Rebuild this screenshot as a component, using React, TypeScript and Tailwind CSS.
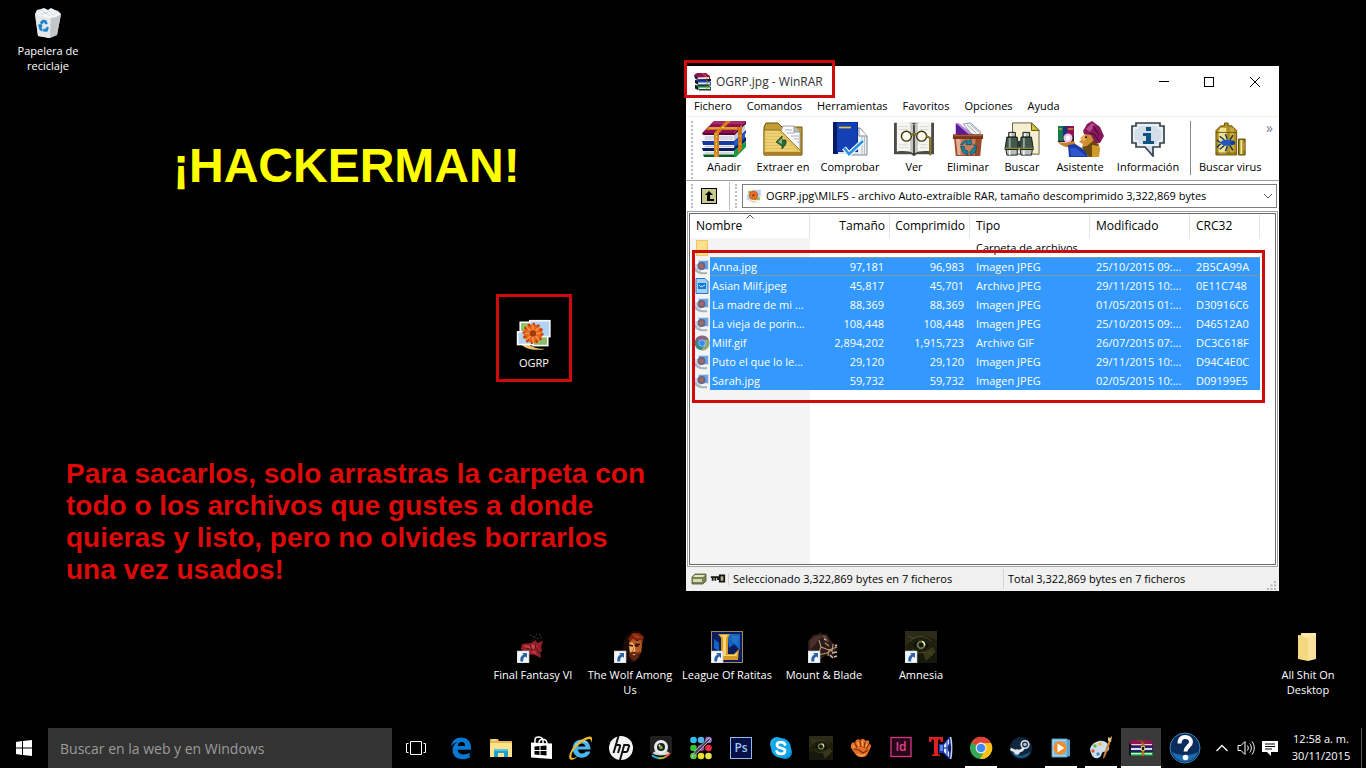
import type { ReactNode } from "react";

type IconProps = { className?: string };

/* ---------- Desktop icons ---------- */

function ShortcutArrow() {
  return (
    <g>
      <rect x="0" y="20" width="12" height="12" fill="#f4f6f8" stroke="#b9bec4" strokeWidth="0.6" />
      <path d="M5 22h5v5L8.4 25.4C6.600 26.400 6 28 6.200 30.500H3.400C2.800 27 4 24.800 6.600 23.600z" fill="#2c62a6" />
    </g>
  );
}

function RecycleBinIcon() {
  return (
    <svg viewBox="0 0 28 32" className="h-8 w-7" aria-hidden="true">
      <path d="M1 7l16 3 10-3-4 21-8 3-11-2z" fill="#d9dbdd" />
      <path d="M1 7l16 3-1 21-12-2z" fill="#e6e8e9" />
      <path d="M17 10l10-3-4 21-7 3z" fill="#c2c6c9" />
      <path d="M1 7l2-4 4-1 3-1 4 2 3-2 4 2 3 1 3 3-5 3-6 1-6-1z" fill="#f5f6f7" />
      <path d="M4 5l4-2 3 4 4-3 4 4 4-3M7 8l4-3 5 4" fill="none" stroke="#c9cdd0" strokeWidth="0.8" />
      <path d="M5.500 15.500l3.500-3 3.500 1 1.200 3.500-2.600.3-1-2-2.300 2.200z" fill="#1b84d0" />
      <path d="M4 17.500l3.500-.5 1 2-1 2 1.200 1.500-.4 2-2.800-1.500z" fill="#1b84d0" />
      <path d="M9 24.500l.6-3 1.500.6 2-2.600 1.800 1.200-1.600 4z" fill="#1b84d0" />
    </svg>
  );
}

function PhotoIcon({ className = "h-4 w-4" }: IconProps) {
  return (
    <svg viewBox="0 0 34 30" className={className} aria-hidden="true">
      <path d="M1 14c0 10 8 15 20 15 3 0 5 0 6-1-12 0-19-5-21-15z" fill="#ecc268" />
      <rect x="4" y="3" width="13" height="11" fill="#92c46a" stroke="#fff" strokeWidth="1.500" />
      <rect x="1.500" y="12" width="16" height="12" fill="#b4d3ec" stroke="#fff" strokeWidth="1.500" />
      <rect x="16" y="14" width="14" height="11" fill="#8dbd6a" stroke="#fff" strokeWidth="1.500" />
      <rect x="13" y="1.500" width="19" height="15" fill="#b2d2f4" stroke="#f5f5f5" strokeWidth="1.500" />
      <circle cx="16" cy="13.500" r="9" fill="#e8661e" />
      <circle cx="16" cy="13.500" r="8.500" fill="none" stroke="#c23f0c" strokeWidth="3" strokeDasharray="2 2.400" />
      <path d="M16 5v17M8 13.500h16M10 7.500l12 12M22 7.500l-12 12" stroke="#f79a48" strokeWidth="1.300" />
      <circle cx="16" cy="13.500" r="3" fill="#a33a0c" />
    </svg>
  );
}

function FinalFantasyIcon() {
  return (
    <svg viewBox="0 0 32 32" className="h-8 w-8" aria-hidden="true">
      <path d="M15 10l3-4 3 2 5-2M13 4l3 2 4-3M22 3l2 2" stroke="#39403f" strokeWidth="1" fill="none" strokeDasharray="2 1.500" />
      <path d="M5 13l9-1 5-3 1 3 6-2-2 6 1 4-2 1 1 6-6-3-9-1-5-5z" fill="#97202b" />
      <path d="M8 14l5 1 4-2 3 2-3 3-6-1-4-1zM14 21l4-1 2 3" fill="#c8424a" />
      <path d="M9 17l3 1M13 14l2 5M18 13l1 5M20 18l2 5" stroke="#481016" strokeWidth="1" />
      <ShortcutArrow />
    </svg>
  );
}

function WolfIcon() {
  return (
    <svg viewBox="0 0 32 32" className="h-8 w-8" aria-hidden="true">
      <path d="M8 20l3-14 7-6h6l6 5-2 9 1 5-4 8-6 5-6-2-4-5z" fill="#1c0a06" />
      <path d="M14 8l5-6 6 0 5 4-2 7-4-4-8 1z" fill="#7c2410" />
      <path d="M18 3l5 1 5 3-6 0z" fill="#a83c18" />
      <path d="M15 11l4-3 4 2 4-1 1 5-1 7-4 6-4 1-3-5z" fill="#b55a26" />
      <path d="M15 13l3-2 2 3-1 5-3 3z" fill="#f0ae60" />
      <path d="M21 12l4 1-1 3-2 0z" fill="#5a200e" />
      <path d="M15 14l4 1M21 15l5-2" stroke="#2c0c04" strokeWidth="1.400" />
      <path d="M15 22l5-1 4 1 2-2-1 6-4 4-3-1-3-4z" fill="#5e2412" />
      <path d="M18 23h4l-2 1.500z" fill="#e8a06a" />
      <path d="M20 15l1 5-2 0" stroke="#ffd08a" fill="none" />
      <ShortcutArrow />
    </svg>
  );
}

function LeagueIcon() {
  return (
    <svg viewBox="0 0 32 32" className="h-8 w-8" aria-hidden="true">
      <rect x="0.500" y="0.500" width="31" height="31" fill="#0a1c5c" stroke="#9b8b58" />
      <path d="M16 3h13v16l-6-6-5 4zM3 8l5 4v8l-5-3z" fill="#1463c0" />
      <path d="M20 4l8 1-2 9-5-4z" fill="#2472c8" />
      <path d="M7 3h12l-2 4v16h6l5-5-1 11H6l4-4V7z" fill="#d99a24" />
      <path d="M9 4h8l-2 3v17h8l3-3-.5 4H11l1-2V7z" fill="#f7d675" />
      <ShortcutArrow />
    </svg>
  );
}

function MountBladeIcon() {
  return (
    <svg viewBox="0 0 32 32" className="h-8 w-8" aria-hidden="true">
      <path d="M0 21V10l5-6 5-1 3-2 1 2 5 0 2 4 4 5 4 1 1 4-2 2 1 3-4 1 2 3-4 1-5-3-6 5z" fill="#2b1c1a" />
      <path d="M2 10l4-4 6-2 3 2-5 3-3 5-5 4z" fill="#4a302c" />
      <path d="M14 4l4 1 3 6-4-1z" fill="#6a4a44" />
      <path d="M11 9l2 7 8 3 8-3M13 16l-3 8 9-2 6-4M21 18l-1 7M25 13l-1 8M17 12l4 3" stroke="#b89474" strokeWidth="1.100" fill="none" />
      <path d="M24 22l5-1M26 26l3-1M22 24l3 3M27 15l2-1" stroke="#c9b8a8" strokeWidth="1.400" />
      <path d="M16 8l2 1" stroke="#d8b0a0" strokeWidth="1.300" />
      <ShortcutArrow />
    </svg>
  );
}

function AmnesiaArt() {
  return (
    <g>
      <rect width="32" height="32" fill="#1e1f0f" />
      <path d="M0 0h32v9L20 5 8 8 0 16z" fill="#2b2c17" />
      <path d="M0 24l10-5 12 4 10-6v15H0z" fill="#16180c" />
      <path d="M18 22l10-6 3 5-10 9z" fill="#363819" />
      <path d="M8 14c4-6 12-6 16 1-4 5-12 5-16-1z" fill="#0e1008" />
      <circle cx="16" cy="14" r="4.400" fill="#6d7240" />
      <circle cx="16" cy="14" r="2.400" fill="#121507" />
      <path d="M17 10.500c2 .5 3 2 2.500 4" stroke="#e6ecc4" strokeWidth="1.500" fill="none" />
      <path d="M5 10c6-6 15-6 21 0M7 18l5 4 10-1M24 20l3 5M3 5l5 2" stroke="#484a28" fill="none" />
    </g>
  );
}

function AmnesiaIcon() {
  return (
    <svg viewBox="0 0 32 32" className="h-8 w-8" aria-hidden="true">
      <AmnesiaArt />
      <ShortcutArrow />
    </svg>
  );
}

function DesktopFolderIcon() {
  return (
    <svg viewBox="0 0 32 32" className="h-8 w-8" aria-hidden="true">
      <path d="M6 4h11l3 3v21H6z" fill="#e5bf58" />
      <path d="M9 2h15v26H9z" fill="#fbe9a8" />
      <path d="M6 4l10 3v23L6 28z" fill="#f5d77f" />
      <path d="M16 7l8-3v24l-8 2z" fill="#f9e19a" />
    </svg>
  );
}

/* ---------- WinRAR icons ---------- */

function WinRarLogo({ className = "h-4 w-4" }: IconProps) {
  return (
    <svg viewBox="0 0 18 18" className={className} aria-hidden="true">
      <path d="M0 2l3-2h9l4 3v3H4z" fill="#8c1450" />
      <path d="M3 4.500l12-.5v2H4z" fill="#f0e4ea" />
      <path d="M1 7l3 1.500L17 8V6l-4 0z" fill="#1c1030" />
      <path d="M1 7l3-.5h9L17 9v2.500H4L1 9z" fill="#1f48b8" />
      <path d="M4 9.500h12v1.800H4z" fill="#dfe8f8" />
      <path d="M1 12l3 0h10l3 2v3H5l-4-2z" fill="#127a34" />
      <path d="M4 14.500h12v1.600H5z" fill="#dcf2e0" />
      <path d="M0 2l3.500 2.500v2L1 5.500zM1 7l3 2v2.500L1 10zM1 12l3 2.200V17l-3-1.500z" fill="#14101c" />
      <path d="M8 0l5 4v13" fill="none" stroke="#b58a28" strokeWidth="0.900" />
      <path d="M3 7h13M4 12h13M5 17h12" stroke="#14101c" strokeWidth="0.900" />
    </svg>
  );
}

function AddIcon() {
  return (
    <svg viewBox="0 0 44 36" className="h-9 w-11" aria-hidden="true">
      <path d="M0 12L12 0h32L32 12z" fill="#8d1150" />
      <path d="M12 0h32l-3 3H9z" fill="#a92a6c" />
      <path d="M0 12h32v2H1z" fill="#5c0832" />
      <path d="M32 12L44 0v3L32 15z" fill="#6a0c40" />
      <path d="M2 14h30v6H1z" fill="#f1f2f7" />
      <path d="M32 15L43 4v5L32 20z" fill="#c9cad8" />
      <path d="M0 20h32l12-11v3L32 24H1z" fill="#173a9c" />
      <path d="M2 24h30v4H1z" fill="#eef1f8" />
      <path d="M32 21l11-10v7L32 28z" fill="#2258c8" />
      <path d="M0 27h32l12-11v4L32 30H1z" fill="#0d1d60" />
      <path d="M2 30h30v4H1z" fill="#e8f4ec" />
      <path d="M32 30l12-10v6L34 36h-2z" fill="#169a40" />
      <path d="M1 33.500h31V36H2z" fill="#0b5a24" />
      <path d="M3 16h28M3 18h28M3 25.500h28M3 32h28" stroke="#a8adbe" strokeWidth="0.700" />
      <path d="M12 12L24 0h5L17 12v24h-5z" fill="#db7c1c" />
      <path d="M6 6h32l-3 3H4zM36 8l4-4v24l-4 4z" fill="#cf7318" />
      <path d="M14 12v24M7 7h28" stroke="#f9bd5b" strokeWidth="1" />
      <g fill="#ffe14d" stroke="#7e4108" strokeWidth="0.500">
        <circle cx="14.500" cy="16" r="1.400" />
        <circle cx="14.500" cy="23" r="1.400" />
        <circle cx="14.500" cy="30" r="1.400" />
        <circle cx="21" cy="6.500" r="1.600" />
        <circle cx="38" cy="15" r="1.200" />
        <circle cx="38" cy="23" r="1.200" />
      </g>
    </svg>
  );
}

function ExtractIcon() {
  return (
    <svg viewBox="0 0 40 34" className="h-9 w-10" aria-hidden="true">
      <path d="M1 5l2-4h12l4 4h20v28H1z" fill="#c39c38" stroke="#6d5108" />
      <path d="M20 4h11l6 6v20L18 9z" fill="#f8f8fa" stroke="#838383" strokeWidth="0.700" />
      <path d="M31 4v6h6" fill="#bac3cc" stroke="#777" strokeWidth="0.700" />
      <path d="M22 8h7M24 11h8M28 14h8M31 17h5M34 20h3" stroke="#a9b4c0" />
      <path d="M1 8h16l21 21v4H1z" fill="#e2c05c" stroke="#8a6912" strokeWidth="0.800" />
      <path d="M3 10h13M3 13h15M3 16h18M3 19h21M3 22h24M3 25h27M3 28h30" stroke="#f6e296" />
      <path d="M1 30h37v3H1z" fill="#a98024" />
      <path d="M13 20l6-6v4h4v4l-4 5v-3z" fill="#2e6838" stroke="#153d1c" strokeWidth="0.700" />
      <path d="M15 20l4-4v6z" fill="#8fb878" />
    </svg>
  );
}

function TestIcon() {
  return (
    <svg viewBox="0 0 36 36" className="h-9 w-9" aria-hidden="true">
      <path d="M16 7h12l7 8v19H16z" fill="#edf0f4" stroke="#7d858f" />
      <path d="M27 7v8h8" fill="#fff" stroke="#7d858f" />
      <path d="M30 15v18M32.500 15v18" stroke="#b5bbc3" />
      <path d="M1 1h25v32H1z" fill="#0c2c98" />
      <path d="M4 2h21v28H4z" fill="#1440b4" />
      <path d="M1 1h4v32H1z" fill="#061a68" />
      <path d="M6 32h20" stroke="#d8e0f2" strokeWidth="2" />
      <path d="M7 6.500h12" stroke="#dfc34c" strokeWidth="1.700" />
      <path d="M12 27l5 6L31 20" fill="none" stroke="#fff" strokeWidth="5" />
      <path d="M12 27l5 6L31 20" fill="none" stroke="#2796e2" strokeWidth="2.600" />
    </svg>
  );
}

function ViewIcon() {
  return (
    <svg viewBox="0 0 42 36" className="h-9 w-10" aria-hidden="true">
      <path d="M0 1h42v33H24l-3 2-3-2H0z" fill="#4e4a46" />
      <path d="M3 0c8 0 14 0 18 3 4-3 10-3 18-3v31c-9-1-14 0-18 2-4-2-9-3-18-2z" fill="#f5f5f2" />
      <path d="M17 1l4 2 4-2v30l-4 2-4-2z" fill="#c4c4c0" />
      <path d="M21 3v31" stroke="#252525" strokeWidth="1.600" />
      <path d="M5 5h10M27 5h10M5 8h10M27 8h10M5 24h10M27 24h8M5 27h10M27 27h8" stroke="#d8d8d4" />
      <circle cx="13" cy="15" r="5.200" fill="#fbfbee" stroke="#3c340c" strokeWidth="1.500" />
      <circle cx="29" cy="15" r="5.200" fill="#fbfbee" stroke="#3c340c" strokeWidth="1.500" />
      <path d="M18 14c2-2 4-2 6 0M34 15l4 2v18" fill="none" stroke="#4a400c" strokeWidth="2.200" />
      <path d="M18 14c2-2 4-2 6 0M34 15l4 2v18" fill="none" stroke="#c2a630" strokeWidth="1" />
    </svg>
  );
}

function DeleteIcon() {
  return (
    <svg viewBox="0 0 34 36" className="h-9 w-8" aria-hidden="true">
      <path d="M4 1l19 14H4z" fill="#5c1c98" />
      <path d="M4 1h3l17 13-3 2z" fill="#b98ad8" />
      <path d="M12 2l8-1 11 10-5 4-6-3z" fill="#f3f4f5" stroke="#777c81" strokeWidth="0.800" />
      <path d="M16 3l10 9M20 3l9 8" stroke="#9ea6ac" />
      <path d="M2 15h30l-2 21H4z" fill="#9a4b2d" />
      <path d="M5 18h20l-1 17H6z" fill="#c4805e" />
      <path d="M4 18h5v17H6z" fill="#e0b090" />
      <path d="M1 13h32v5H1z" fill="#7c3216" />
      <path d="M2 14.500h30" stroke="#bc6c48" />
      <path d="M9 24l5-5 4 1 2-2 1 6h-6l1-2-2-.5-3 3zM9 26h4v3l4 2v4l-5-2zM19 32l5-6-1-2 3 1-1 7-5 3z" fill="#1a86a0" stroke="#0b3f54" strokeWidth="0.700" />
    </svg>
  );
}

function FindIcon() {
  return (
    <svg viewBox="0 0 38 36" className="h-9 w-9" aria-hidden="true">
      <path d="M9 1h20l8 8v25H9z" fill="#f6efcf" stroke="#64593a" />
      <path d="M29 1v8h8z" fill="#d8c332" stroke="#5b5018" />
      <path d="M5 11h7v5H5zM20 11h7v5h-7z" fill="#b5bab5" stroke="#111" />
      <path d="M3 16h11l1 13H1zM18 16h11l2 13H17z" fill="#42584e" stroke="#0e1712" />
      <path d="M2 29h12v6H3zM17 29h13l-1 6H18z" fill="#b7bcbc" stroke="#161a19" />
      <path d="M14 20h4v7h-4z" fill="#2d3b34" />
      <path d="M6 17v11M21 17v11" stroke="#94aa9c" strokeWidth="2" />
      <path d="M6 30v5M21 30v5M7 12v3M22 12v3" stroke="#fff" strokeWidth="1.500" />
      <path d="M1 28h14M17 28h14" stroke="#8c862c" strokeWidth="1.300" />
    </svg>
  );
}

function WizardIcon() {
  return (
    <svg viewBox="0 0 48 36" className="h-9 w-12" aria-hidden="true">
      <path d="M2 5h16v16H2z" fill="#2a1426" />
      <path d="M2 5h5v15H2z" fill="#15794a" />
      <path d="M7 5h4v15H7z" fill="#1b2f86" />
      <path d="M11 5h7v10h-7z" fill="#86144e" />
      <path d="M12 8h5M3 8h3" stroke="#e9c34a" />
      <circle cx="12" cy="17" r="4.500" fill="#f3c8ec" />
      <circle cx="12" cy="17" r="2.200" fill="#fff" />
      <path d="M1 20c4 3 12 1 17 0l2 4c-4 4-14 3-19-4z" fill="#c58038" />
      <path d="M12 24l7-1 15 9 3 4H13z" fill="#1b3aa4" />
      <path d="M14 27l6 0 10 8H15z" fill="#2e58cc" />
      <path d="M29 10l12 6 3 12-1 8H32l-3-8-3-2 1-3-4-2 5-5z" fill="#cf8e34" />
      <path d="M24 17l5-4 1 5-2 3z" fill="#e8ae54" />
      <path d="M26 26l5-1 7-6 5 6v11H33z" fill="#6b4a10" />
      <path d="M36 24l7 1v11h-7z" fill="#d0992a" />
      <path d="M27 10l4-7 5-3 8 6 4 9-4 7-5 0-4-8-7-1z" fill="#86185c" />
      <path d="M30 8l6-6 3 2-5 7z" fill="#b64c8c" />
      <path d="M34 12l5 2 4 6M37 5l6 9" fill="none" stroke="#520c38" strokeWidth="1.300" />
      <path d="M29 16l2 .5" stroke="#1c0f04" strokeWidth="1.500" />
    </svg>
  );
}

function InfoIcon() {
  return (
    <svg viewBox="0 0 36 36" className="h-9 w-9" aria-hidden="true">
      <path d="M6 2h24v3h4v17h-4v4h-7v9l-8-9H6v-4H2V5h4z" fill="#d4dee8" stroke="#38424c" strokeWidth="1.700" />
      <path d="M8 4h20v3h4v13h-4v4H8v-4H4V7h4z" fill="none" stroke="#fff" />
      <path d="M16 6h5v4h-5zM13 12h8v8h3v3H13v-3h3v-5h-3z" fill="#0d537f" />
    </svg>
  );
}

function VirusIcon() {
  return (
    <svg viewBox="0 0 34 36" className="h-9 w-8" aria-hidden="true">
      <path d="M10 1h4v3h4l5 5v26H1V9l5-5h4z" fill="#b09224" stroke="#67500b" />
      <path d="M6 6h6v28H4V9z" fill="#f0e394" />
      <path d="M16 6h4v28h-4z" fill="#caaa37" />
      <path d="M1 11h22M1 33h22" stroke="#725809" />
      <ellipse cx="13" cy="22" rx="7" ry="3.300" fill="#1f58c0" />
      <circle cx="19" cy="22" r="2.500" fill="#123e90" />
      <path d="M10 19L5 15M13 18l-2-5M16 19l3-5M10 25l-5 4M13 26l-2 5M16 25l3 5M6 22l-4-3M6 23l-4 4" stroke="#0b2962" strokeWidth="1.400" />
      <path d="M25 18h7v17h-7z" fill="#9c851d" stroke="#564708" />
      <path d="M28 19v15" stroke="#f2ec9a" strokeWidth="2" />
      <path d="M30 22h2v8h-2z" fill="#c08a31" />
    </svg>
  );
}

function DriveIcon() {
  return (
    <svg viewBox="0 0 16 12" className="h-3 w-4" aria-hidden="true">
      <path d="M1 4l3-3h11v7l-3 3H1z" fill="#798452" stroke="#4e5b36" strokeWidth="0.800" />
      <path d="M2 4l2-2h10l-2 2z" fill="#dfe5bc" />
      <path d="M2 6h9v3H2z" fill="#d5dcae" />
    </svg>
  );
}

function KeyIcon() {
  return (
    <svg viewBox="0 0 18 12" className="h-3 w-4" aria-hidden="true">
      <path d="M1 3h9V1h7v9h-7V7H8V5H7v3H5V5H4v3H2V5H1z" fill="#16160f" />
      <path d="M12 3h3v5h-3z" fill="#b8b494" />
    </svg>
  );
}

function ImageFileIcon() {
  return (
    <svg viewBox="0 0 16 16" className="h-4 w-4 shrink-0" aria-hidden="true">
      <path d="M1 5h6v8H1z" fill="#c3d5e8" />
      <path d="M1 9c1 4 5 6 12 5" fill="none" stroke="#a9b4b4" strokeWidth="2" />
      <path d="M4.500 1.500h10v9h-10z" fill="#6ea2dc" stroke="#cfe0f1" />
      <circle cx="7.500" cy="7" r="4" fill="#6a6488" />
      <circle cx="7.500" cy="7" r="2.300" fill="#a8685c" />
    </svg>
  );
}

function JpegFileIcon() {
  return (
    <svg viewBox="0 0 16 16" className="h-4 w-4 shrink-0" aria-hidden="true">
      <path d="M2 .5h9l3 3v12H2z" fill="#a4cff6" stroke="#287ac8" />
      <path d="M4 5h8v6H4z" fill="#1478d6" />
      <path d="M5 7l2 2 2-1 2-1" fill="none" stroke="#d2ebff" />
    </svg>
  );
}

function ChromeIcon({ className = "h-6 w-6" }: IconProps) {
  return (
    <svg viewBox="0 0 24 24" className={className} aria-hidden="true">
      <circle cx="12" cy="12" r="11" fill="#35a852" />
      <path d="M12 12L2.500 6.500A11 11 0 0 1 22 7H12z" fill="#e44134" />
      <path d="M22 7a11 11 0 0 1-11 16l5-9-1-7z" fill="#fbc116" />
      <circle cx="12" cy="12" r="5.400" fill="#f4f4f4" />
      <circle cx="12" cy="12" r="4.300" fill="#4285f4" />
    </svg>
  );
}

function ChromeFileIcon() {
  return (
    <svg viewBox="0 0 24 24" className="h-4 w-4 shrink-0" aria-hidden="true">
      <circle cx="12" cy="12" r="11" fill="#358a88" />
      <path d="M12 12L2.500 6.500A11 11 0 0 1 22 7H12z" fill="#8c6480" />
      <path d="M22 7a11 11 0 0 1-11 16l5-9-1-7z" fill="#96a878" />
      <circle cx="12" cy="12" r="5.400" fill="#a4ccf8" />
      <circle cx="12" cy="12" r="4.300" fill="#3a8cf4" />
    </svg>
  );
}

/* ---------- Taskbar icons ---------- */

const svg24 = "h-6 w-6";

function WindowsLogo() {
  return (
    <svg viewBox="0 0 16 16" className="h-4 w-4" aria-hidden="true">
      <path d="M0 2l6-1v6.500H0zM7 1l9-1v7.500H7zM0 8.500h6V15l-6-1zM7 8.500h9V16l-9-1z" fill="#fff" />
    </svg>
  );
}

function TaskViewIcon() {
  return (
    <svg viewBox="0 0 20 14" className="h-[14px] w-5" fill="none" stroke="#fff" aria-hidden="true">
      <path d="M4.500.5h11v13h-11zM2.500 2.500h-2v9h2M17.500 2.500h2v9h-2" />
    </svg>
  );
}

function EdgeIcon() {
  return (
    <svg viewBox="0 0 24 24" className={svg24} aria-hidden="true">
      <path d="M2 10.500C3.200 4.500 7 1.500 12.200 1.500c6.300 0 9.800 4.600 9.800 10v2.300H8.700c.3 3.400 3 4.700 6 4.700 2.300 0 4.200-.6 6-1.700v4.600c-2 1.100-4.500 1.800-7.200 1.800-6 0-10-3.600-10-9.200 0-3.500 1.900-6.500 5.200-8-3.300.8-5.300 2.500-6.700 4.500zM8.800 10h7.300c0-2.500-1.100-4-3.300-4-2.300 0-3.700 1.500-4 4z" fill="#0879d2" />
    </svg>
  );
}

function ExplorerIcon() {
  return (
    <svg viewBox="0 0 24 24" className={svg24} aria-hidden="true">
      <path d="M1 3h8l1 2h13v16H1z" fill="#e5b957" />
      <path d="M1 7h22v14H1z" fill="#ffe28c" />
      <path d="M3 4h4" stroke="#fff3c5" />
      <path d="M5 13h14v8h-4v-4H9v4H5z" fill="#1e9fcc" />
      <path d="M5 13h14v2H5z" fill="#52c5e5" />
    </svg>
  );
}

function StoreIcon() {
  return (
    <svg viewBox="0 0 24 24" className={svg24} aria-hidden="true">
      <path d="M2 6.500l21 1V23L2 21.500z" fill="#fff" />
      <path d="M6 8V4c0-4 7-4 8 0v4M10 7c0-5 7-5 8 0v2" fill="none" stroke="#fff" strokeWidth="1.500" />
      <path d="M5.500 10.500l5-.5v4h-5zM11.500 10l6-.5V14h-6zM5.500 15h5v4l-5-.5zM11.500 15h6v4.500l-6-.5z" fill="#000" />
    </svg>
  );
}

function InternetExplorerIcon() {
  return (
    <svg viewBox="0 0 24 24" className={svg24} aria-hidden="true">
      <path d="M12.500 3.500C18 3.500 21.500 7.500 21.500 13.500H9c.3 2.700 1.800 4 4 4 1.800 0 3-.7 3.800-2h4.500c-1.200 4-4.400 6.200-8.300 6.200-5.700 0-9.300-4-9.300-9.200S7.200 3.500 12.500 3.500zM9.100 10.500h7.300c-.3-2-1.600-3-3.600-3-1.900 0-3.300 1.100-3.700 3z" fill="#4cb4ec" />
      <path d="M5 12c1-4 4-7 8-7.500 3 0 5 1 6 3-3-2-9-2-11 1z" fill="#a4defb" />
      <path d="M4 15C2 19 1.500 22 4 22c1.500 0 3-.7 5-2-2.500 3-5.500 4.500-7.500 3.500-3-1.700-.5-9 5-14.500C13 2.500 20-.5 22.300 1c1.400 1 .9 3.500-.3 6 .3-2.500 0-4-1.600-4-3.400 0-12.400 6-16.400 12z" fill="#f1b829" />
    </svg>
  );
}

function HpIcon() {
  return (
    <svg viewBox="0 0 24 24" className={svg24} aria-hidden="true">
      <circle cx="12" cy="12" r="12" fill="#f5f5f5" />
      <g fill="none" stroke="#111" strokeWidth="2">
        <path d="M9.500 0L4.500 17M6.800 9h3.500c.8 0 1 .6.800 1.200L9 17M15.500 8L11 24M15 9h4c1 0 1.300.6 1 1.500L18.500 15c-.2.700-.7 1-1.500 1h-4" />
      </g>
    </svg>
  );
}

function WebcamIcon() {
  return (
    <svg viewBox="0 0 24 24" className={svg24} aria-hidden="true">
      <rect x="1" y="0" width="22" height="18" rx="2" fill="#202020" />
      <path d="M3 19c2 2 4 3 7 3" fill="none" stroke="#1fa6d1" strokeWidth="2" />
      <path d="M9 22c3 .5 6 0 8-1.500" fill="none" stroke="#9bc935" strokeWidth="2" />
      <path d="M16 21c2-1 4-2 5-4" fill="none" stroke="#ef563d" strokeWidth="2" />
      <ellipse cx="12" cy="17" rx="8" ry="2.500" fill="#cfd3d1" />
      <circle cx="12" cy="11" r="7" fill="#e8ebea" />
      <circle cx="12" cy="11" r="4" fill="#172023" />
      <circle cx="12" cy="11.500" r="1.800" fill="#7fa72d" />
      <circle cx="10.500" cy="9.500" r="1" fill="#fff" />
    </svg>
  );
}

function PaletteDotsIcon() {
  return (
    <svg viewBox="0 0 24 24" className={svg24} aria-hidden="true">
      <circle cx="4.500" cy="4" r="3.300" fill="#2dbff0" />
      <circle cx="12" cy="4" r="3.300" fill="#54b5ed" />
      <circle cx="19.500" cy="4" r="3.300" fill="#a869dd" />
      <circle cx="4.500" cy="12" r="3.300" fill="#31c631" />
      <circle cx="12" cy="12" r="3.300" fill="#a33ba7" />
      <circle cx="19.500" cy="12" r="3.300" fill="#f12942" />
      <circle cx="4.500" cy="20" r="3.300" fill="#4fd034" />
      <circle cx="12" cy="20" r="3.300" fill="#e7df20" />
      <circle cx="19.500" cy="20" r="3.300" fill="#e8e04a" />
      <path d="M3 21l3-6L20 2l2 1-14 14z" fill="#41464f" stroke="#c7d0d6" strokeWidth="0.800" />
    </svg>
  );
}

function PhotoshopIcon() {
  return (
    <svg viewBox="0 0 24 24" className={svg24} aria-hidden="true">
      <rect x="1.500" y="1.500" width="21" height="21" fill="#071044" stroke="#8cb9f4" />
      <text x="12" y="16" textAnchor="middle" fontSize="12" fontWeight="600" fontFamily="Open Sans, sans-serif" fill="#9bc6fa">
        Ps
      </text>
    </svg>
  );
}

function SkypeIcon() {
  return (
    <svg viewBox="0 0 24 24" className={svg24} aria-hidden="true">
      <circle cx="8" cy="8" r="7" fill="#1eb2ec" />
      <circle cx="16" cy="16" r="7" fill="#0798df" />
      <circle cx="12" cy="12" r="10" fill="#14a7e8" />
      <path d="M16 8.500c-.7-1.600-2-2.400-4-2.400-2.200 0-4 1-4 2.800 0 4 8 2.200 8 5.800 0 2-1.700 3.200-4.100 3.200-2.200 0-3.700-.9-4.300-2.600" fill="none" stroke="#fff" strokeWidth="2.700" strokeLinecap="round" />
    </svg>
  );
}

function EyeTaskIcon() {
  return (
    <svg viewBox="0 0 32 32" className={svg24} aria-hidden="true">
      <AmnesiaArt />
    </svg>
  );
}

function FistIcon() {
  return (
    <svg viewBox="0 0 24 24" className={svg24} aria-hidden="true">
      <path d="M2 12C1 8 4 5 6 7c0-4 5-5 5-2 1-3 5-3 5 0 3-2 5 0 4 3 3 0 2 3 1 5l-3 6c-2 3-8 3-11 0z" fill="#e36e27" />
      <path d="M6 7l2 5M11 5l1 6M16 6l-1 6M20 8l-3 5M5 13l5 1 4 3 5-3" fill="none" stroke="#7a2a0c" strokeWidth="1.100" />
      <path d="M4 9l1 3M8.500 6l1.500 4M13.500 5v5M18 8l-1 3M8 18c3 2 6 2 8 0" fill="none" stroke="#ffa550" strokeWidth="1.300" />
    </svg>
  );
}

function InDesignIcon() {
  return (
    <svg viewBox="0 0 24 24" className={svg24} aria-hidden="true">
      <rect x="2" y="1.500" width="20" height="19" fill="#250715" stroke="#da3887" strokeWidth="1.300" />
      <text x="12" y="15" textAnchor="middle" fontSize="12" fontWeight="600" fontFamily="Open Sans, sans-serif" fill="#e84291">
        Id
      </text>
    </svg>
  );
}

function SpeechIcon() {
  return (
    <svg viewBox="0 0 24 24" className={svg24} aria-hidden="true">
      <path d="M0 1h14v5h-2L11 3.500H9V18l2 1v1H3v-1l2-1V3.500H3L2 6H0z" fill="#e02020" />
      <path d="M10 8h4l6-7h2v22h-2l-6-6h-4z" fill="#1b36b4" />
      <path d="M11 9h3v6h-3z" fill="#5f86e8" />
      <path d="M15 9l5-6v18l-5-5z" fill="#e6ecf8" />
      <path d="M18 5v15M15 12h4" stroke="#3558c8" strokeWidth="1.400" />
      <path d="M21.500 1c1.500 4 1.500 18 0 22" fill="none" stroke="#cdd3de" strokeWidth="1.500" />
      <ellipse cx="20.500" cy="12" rx="1.700" ry="4" fill="#111d75" />
    </svg>
  );
}

function SteamIcon() {
  return (
    <svg viewBox="0 0 24 24" className={svg24} aria-hidden="true">
      <circle cx="12" cy="12" r="11" fill="#10263f" />
      <path d="M2 15a11 11 0 0 0 20 1L12 20z" fill="#1b587f" />
      <path d="M1.500 13l6.500 3 5-2 3-4" fill="none" stroke="#dfe5eb" strokeWidth="2.800" />
      <circle cx="16" cy="8.500" r="3.800" fill="#132b42" stroke="#dfe5eb" strokeWidth="1.600" />
      <circle cx="8" cy="16" r="2.800" fill="#dfe5eb" />
      <circle cx="16" cy="8.500" r="1.800" fill="#adc0cf" />
    </svg>
  );
}

function MediaIcon() {
  return (
    <svg viewBox="0 0 24 24" className={svg24} aria-hidden="true">
      <path d="M3 3h15v18H3z" fill="#a8d4ec" stroke="#4f9cc0" />
      <path d="M18 3l3 1v16l-3 1z" fill="#5aa2c8" />
      <path d="M5 5h12v14H5z" fill="#7cb8d8" />
      <circle cx="11" cy="12" r="6.500" fill="#f78a25" />
      <path d="M8.500 7.500l7 4.500-7 4.500z" fill="#fff" />
    </svg>
  );
}

function PaintIcon() {
  return (
    <svg viewBox="0 0 24 24" className={svg24} aria-hidden="true">
      <path d="M2 17C-1 12 4 6 10 5c6-1 11 3 10 8-1 4-4 2-6 3s-1 5-5 6c-3 1-6-1-7-5z" fill="#cfdde9" />
      <circle cx="4" cy="15" r="1.700" fill="#e45335" />
      <circle cx="6" cy="10" r="1.700" fill="#65b541" />
      <circle cx="11" cy="8" r="1.700" fill="#e9b728" />
      <circle cx="9" cy="18" r="1.700" fill="#388bd3" />
      <path d="M20 4l2 1-6 16-2 2 .5-4z" fill="#c8803a" />
      <path d="M19 1l2 1 2-2-1 6-3-1z" fill="#e8c17b" />
    </svg>
  );
}

function RarTaskIcon() {
  return (
    <svg viewBox="0 0 24 24" className={svg24} aria-hidden="true">
      <path d="M0 7l3-3h19l2 3v3H1z" fill="#8c1450" />
      <path d="M2 8h21v1.500H3z" fill="#ecc8da" />
      <path d="M0 10.500h24v4.500H1z" fill="#2a2590" />
      <path d="M2 12h21v2H2z" fill="#d8dcf4" />
      <path d="M0 15.500h24V20H1z" fill="#118a3a" />
      <path d="M2 17h21v1.500H2z" fill="#cdeed4" />
      <path d="M0 7l1.500 2v11L0 18zM0 10h24M0 15.300h24" fill="#140c20" stroke="#140c20" strokeWidth="0.800" />
      <path d="M7 4l10 3M12 4l3 4v12h-2V8z" fill="#c98a28" stroke="#7e5414" strokeWidth="0.700" />
      <rect x="12.500" y="10.500" width="3" height="4" fill="#1c1a14" stroke="#e4cb75" strokeWidth="0.800" />
    </svg>
  );
}

function HelpIcon() {
  return (
    <svg viewBox="0 0 32 32" className="h-8 w-8" aria-hidden="true">
      <circle cx="16" cy="16" r="15" fill="#0a2c5c" stroke="#3387b5" />
      <path d="M3 20a13.500 13.500 0 0 0 26 0c-6 4-20 4-26 0z" fill="#1a6cb0" />
      <path d="M10.500 11.500C10.500 7 13 5 16.200 5c3.300 0 5.800 1.900 5.800 5 0 4-5.500 4.800-5.500 9.500" fill="none" stroke="#fff" strokeWidth="4" />
      <circle cx="16.500" cy="25.500" r="2.800" fill="#fff" />
    </svg>
  );
}

/* ---------- Data ---------- */

const menus = ["Fichero", "Comandos", "Herramientas", "Favoritos", "Opciones", "Ayuda"];

const tools: { label: string; icon: ReactNode; width: string }[] = [
  { label: "Añadir", icon: <AddIcon />, width: "w-14" },
  { label: "Extraer en", icon: <ExtractIcon />, width: "w-[62px]" },
  { label: "Comprobar", icon: <TestIcon />, width: "w-18" },
  { label: "Ver", icon: <ViewIcon />, width: "w-14" },
  { label: "Eliminar", icon: <DeleteIcon />, width: "w-13" },
  { label: "Buscar", icon: <FindIcon />, width: "w-14" },
  { label: "Asistente", icon: <WizardIcon />, width: "w-15" },
  { label: "Información", icon: <InfoIcon />, width: "w-19" },
];

type FileRow = { name: string; size: string; packed: string; type: string; date: string; crc: string; icon: ReactNode };

const files: FileRow[] = [
  { name: "Anna.jpg", size: "97,181", packed: "96,983", type: "Imagen JPEG", date: "25/10/2015 09:...", crc: "2B5CA99A", icon: <ImageFileIcon /> },
  { name: "Asian Milf.jpeg", size: "45,817", packed: "45,701", type: "Archivo JPEG", date: "29/11/2015 10:...", crc: "0E11C748", icon: <JpegFileIcon /> },
  { name: "La madre de mi ...", size: "88,369", packed: "88,369", type: "Imagen JPEG", date: "01/05/2015 01:...", crc: "D30916C6", icon: <ImageFileIcon /> },
  { name: "La vieja de porin...", size: "108,448", packed: "108,448", type: "Imagen JPEG", date: "25/10/2015 09:...", crc: "D46512A0", icon: <ImageFileIcon /> },
  { name: "Milf.gif", size: "2,894,202", packed: "1,915,723", type: "Archivo GIF", date: "26/07/2015 07:...", crc: "DC3C618F", icon: <ChromeFileIcon /> },
  { name: "Puto el que lo le...", size: "29,120", packed: "29,120", type: "Imagen JPEG", date: "29/11/2015 10:...", crc: "D94C4E0C", icon: <ImageFileIcon /> },
  { name: "Sarah.jpg", size: "59,732", packed: "59,732", type: "Imagen JPEG", date: "02/05/2015 10:...", crc: "D09199E5", icon: <ImageFileIcon /> },
];

const pinned: { label: string; icon: ReactNode; running?: boolean; active?: boolean }[] = [
  { label: "Microsoft Edge", icon: <EdgeIcon /> },
  { label: "Explorador de archivos", icon: <ExplorerIcon /> },
  { label: "Tienda", icon: <StoreIcon /> },
  { label: "Internet Explorer", icon: <InternetExplorerIcon /> },
  { label: "HP", icon: <HpIcon /> },
  { label: "Cámara", icon: <WebcamIcon /> },
  { label: "Colores", icon: <PaletteDotsIcon /> },
  { label: "Photoshop", icon: <PhotoshopIcon /> },
  { label: "Skype", icon: <SkypeIcon /> },
  { label: "Amnesia", icon: <EyeTaskIcon /> },
  { label: "Puño", icon: <FistIcon /> },
  { label: "InDesign", icon: <InDesignIcon /> },
  { label: "Voz", icon: <SpeechIcon /> },
  { label: "Chrome", icon: <ChromeIcon />, running: true },
  { label: "Steam", icon: <SteamIcon /> },
  { label: "Reproductor", icon: <MediaIcon />, running: true },
  { label: "Paint", icon: <PaintIcon />, running: true },
  { label: "WinRAR", icon: <RarTaskIcon />, running: true, active: true },
];

/* ---------- Pieces ---------- */

function DesktopItem({ label, icon, place }: { label: string; icon: ReactNode; place: string }) {
  return (
    <button type="button" className={`absolute flex w-24 flex-col items-center gap-1 text-center text-[11px] leading-[15px] text-white ${place}`}>
      {icon}
      <span>{label}</span>
    </button>
  );
}

function Grip({ className = "" }: IconProps) {
  return <div className={`w-0 border-l-2 border-dotted border-[#bdbdbd] ${className}`} />;
}

function FileListRow({ file, focused }: { file: FileRow; focused: boolean }) {
  const cell = `bg-[#3399ff] py-0 ${focused ? "shadow-[inset_0_1px_#7f9a9a,inset_0_-1px_#7f9a9a]" : ""}`;
  return (
    <tr className="h-[19px] leading-[19px] whitespace-nowrap text-white">
      <td className="p-0">
        <div className="flex items-center pl-1">
          {file.icon}
          <span className={`flex-1 pl-[2px] ${cell}`}>{file.name}</span>
        </div>
      </td>
      <td className={`pr-[6px] text-right ${cell}`}>{file.size}</td>
      <td className={`pr-[6px] text-right ${cell}`}>{file.packed}</td>
      <td className={`pl-[6px] ${cell}`}>{file.type}</td>
      <td className={`pl-[6px] ${cell}`}>{file.date}</td>
      <td className={`pl-[6px] ${cell}`}>{file.crc}</td>
    </tr>
  );
}

function ArchiveWindow() {
  return (
    <section aria-label="WinRAR" className="absolute top-[66px] left-[686px] flex h-[525px] w-[593px] flex-col bg-white text-[11px] text-black">
      <header className="flex h-[31px] shrink-0 items-center">
        <WinRarLogo className="ml-2 h-[18px] w-[18px]" />
        <h1 className="ml-1 flex-1 text-[12px] text-[#333]">OGRP.jpg - WinRAR</h1>
        <button type="button" aria-label="Minimizar" className="flex h-full w-[45px] items-center justify-center">
          <span className="h-px w-[10px] bg-black" />
        </button>
        <button type="button" aria-label="Maximizar" className="flex h-full w-[45px] items-center justify-center">
          <span className="h-[10px] w-[10px] border border-black" />
        </button>
        <button type="button" aria-label="Cerrar" className="flex h-full w-12 items-center justify-center">
          <svg viewBox="0 0 10 10" className="h-[10px] w-[10px]" stroke="#000" aria-hidden="true">
            <path d="M0 0l10 10M10 0L0 10" />
          </svg>
        </button>
      </header>

      <nav className="flex h-[19px] shrink-0 items-center gap-[15px] pl-2">
        {menus.map((m) => (
          <button type="button" key={m}>
            {m}
          </button>
        ))}
      </nav>

      <div className="flex h-[65px] shrink-0 border-t border-b border-t-[#f0f0f0] border-b-[#9d9d9d] pt-1">
        <Grip className="mr-[3px] ml-[5px] h-[58px]" />
        {tools.map((t) => (
          <button type="button" key={t.label} className={`flex shrink-0 flex-col items-center ${t.width}`}>
            {t.icon}
            <span className="leading-5 whitespace-nowrap">{t.label}</span>
          </button>
        ))}
        <div className="mx-1 h-[54px] w-px bg-[#8a8a8a]" />
        <button type="button" className="ml-1 flex w-[63px] flex-col items-start overflow-hidden">
          <span className="pl-4">
            <VirusIcon />
          </span>
          <span className="leading-5 whitespace-nowrap">Buscar virus</span>
        </button>
        <span className="ml-1 text-[14px] leading-none text-[#777a96]">»</span>
      </div>

      <div className="flex h-[30px] shrink-0 items-center pr-[2px]">
        <Grip className="ml-[5px] h-6" />
        <button type="button" aria-label="Subir un nivel" className="ml-2 flex h-4 w-4 items-center justify-center border border-black bg-[#c9c98c]">
          <svg viewBox="0 0 12 12" className="h-3 w-3" fill="#000" aria-hidden="true">
            <path d="M6 1l4 4H7v4h4v2H4V5H2z" />
          </svg>
        </button>
        <div className="mr-[5px] ml-3 h-7 w-px bg-[#bdbdbd]" />
        <Grip className="mr-[5px] h-6" />
        <label className="flex h-6 flex-1 items-center border border-[#7d7d7d] bg-white">
          <PhotoIcon className="ml-[3px] h-4 w-4" />
          <select aria-label="Ruta" className="min-w-0 flex-1 appearance-none pl-1 outline-none">
            <option>OGRP.jpg\MILFS - archivo Auto-extraíble RAR, tamaño descomprimido 3,322,869 bytes</option>
          </select>
          <svg viewBox="0 0 10 6" className="mr-[3px] h-[6px] w-[10px]" fill="none" stroke="#555" aria-hidden="true">
            <path d="M1 1l4 4 4-4" />
          </svg>
        </label>
      </div>

      <div className="mx-px flex min-h-0 flex-1 flex-col border border-[#a0a0a0] p-px">
        <div className="relative flex-1 border border-[#696969] bg-white">
          <div className="absolute top-6 bottom-0 left-0 w-[120px] bg-[#f4f4f4]" />
          <table className="relative w-[570px] table-fixed border-separate border-spacing-0 text-left">
            <colgroup>
              <col className="w-[120px]" />
              <col className="w-20" />
              <col className="w-20" />
              <col className="w-[120px]" />
              <col className="w-[100px]" />
              <col className="w-[70px]" />
            </colgroup>
            <thead>
              <tr className="h-6 text-[12px] leading-6 [&>th]:border-r [&>th]:border-[#e4e4e4] [&>th]:py-0 [&>th]:font-normal">
                <th className="relative pl-[6px]">
                  <svg viewBox="0 0 8 5" className="absolute top-0 left-14 h-[5px] w-2" fill="none" stroke="#555" aria-hidden="true">
                    <path d="M.5 4.500L4 1l3.500 3.500" />
                  </svg>
                  Nombre
                </th>
                <th className="pr-1 text-right">Tamaño</th>
                <th className="pr-1 text-right">Comprimido</th>
                <th className="pl-[6px]">Tipo</th>
                <th className="pl-[6px]">Modificado</th>
                <th className="pl-[6px]">CRC32</th>
              </tr>
            </thead>
            <tbody>
              <tr className="h-[19px] leading-[19px]">
                <td className="p-0">
                  <div className="ml-[6px] h-4 w-3 border border-[#ecc95e] bg-[#f9e08c]" />
                </td>
                <td />
                <td />
                <td className="py-0 pr-0 pl-[6px]">Carpeta de archivos</td>
                <td />
                <td />
              </tr>
              {files.map((f, i) => (
                <FileListRow key={f.crc} file={f} focused={i === 0} />
              ))}
            </tbody>
          </table>
        </div>
      </div>

      <footer className="flex h-6 shrink-0 items-center bg-[#f0f0f0]">
        <div className="flex w-[43px] items-center gap-[3px] border-r border-[#d5d5d5] pl-[5px]">
          <DriveIcon />
          <KeyIcon />
        </div>
        <p className="w-[275px] border-r border-[#d5d5d5] pl-1 leading-5">Seleccionado 3,322,869 bytes en 7 ficheros</p>
        <p className="flex-1 pl-1 leading-5">Total 3,322,869 bytes en 7 ficheros</p>
        <svg viewBox="0 0 10 10" className="mr-[2px] h-[10px] w-[10px] self-end" fill="#b5b5b5" aria-hidden="true">
          <path d="M7 0h2v2H7zM7 3.500h2v2H7zM7 7h2v2H7zM3.500 3.500h2v2h-2zM3.500 7h2v2h-2zM0 7h2v2H0z" />
        </svg>
      </footer>
    </section>
  );
}

function Taskbar() {
  return (
    <footer className="flex h-10 w-full shrink-0 items-stretch bg-black text-white">
      <button type="button" aria-label="Inicio" className="flex w-12 shrink-0 items-center justify-center">
        <WindowsLogo />
      </button>
      <input type="text" aria-label="Buscar" placeholder="Buscar en la web y en Windows" className="w-[344px] bg-[#333] px-3 text-[14px] text-white outline-none placeholder:text-[#9b9b9b]" />
      <button type="button" aria-label="Vista de tareas" className="mr-px flex w-12 shrink-0 items-center justify-center">
        <TaskViewIcon />
      </button>
      {pinned.map((p) => (
        <button type="button" key={p.label} aria-label={p.label} className={`relative flex w-10 shrink-0 items-center justify-center ${p.active ? "bg-[#3a3a3a]" : ""}`}>
          {p.icon}
          {p.running && <span className={`absolute bottom-0 h-[2px] bg-white ${p.active ? "w-10" : "w-8"}`} />}
        </button>
      ))}
      <button type="button" aria-label="Ayuda" className="flex w-12 shrink-0 items-center justify-center">
        <HelpIcon />
      </button>
      <div className="ml-auto flex shrink-0 items-center">
        <button type="button" aria-label="Iconos ocultos" className="flex w-6 justify-center">
          <svg viewBox="0 0 12 8" className="h-2 w-3" fill="none" stroke="#fff" strokeWidth="1.300" aria-hidden="true">
            <path d="M.5 7L6 1.500 11.500 7" />
          </svg>
        </button>
        <button type="button" aria-label="Volumen" className="flex w-6 justify-center">
          <svg viewBox="0 0 18 16" className="h-4 w-[18px]" fill="none" stroke="#fff" aria-hidden="true">
            <path d="M1 5.500h3l4-4v13l-4-4H1zM10.500 5.500c1 1.500 1 3.500 0 5M12.800 3.500c2 2.700 2 6.300 0 9M15 1.500c3 4 3 9 0 13" />
          </svg>
        </button>
        <button type="button" aria-label="Notificaciones" className="flex w-6 justify-center">
          <svg viewBox="0 0 16 16" className="h-4 w-4" aria-hidden="true">
            <path d="M0 1h16v11H9v4l-4-4H0z" fill="#fff" />
            <path d="M3 4h10M3 6.500h10M3 9h7" stroke="#000" />
          </svg>
        </button>
        <time dateTime="2015-11-30T00:58" className="ml-[10px] flex w-[58px] flex-col items-center pb-[3px] text-[11px] leading-[17px] whitespace-nowrap">
          <span>12:58 a. m.</span>
          <span>30/11/2015</span>
        </time>
        <div className="mr-1 ml-[11px] h-10 w-px bg-[#555]" />
      </div>
    </footer>
  );
}

export default function App() {
  return (
    <div className="flex min-h-screen w-full flex-col overflow-hidden bg-black font-['Open_Sans','Noto_Sans',sans-serif]">
      <main className="relative flex-1">
        <DesktopItem label="Papelera de reciclaje" icon={<RecycleBinIcon />} place="top-[7px] left-0 px-3" />
        <DesktopItem label="OGRP" icon={<PhotoIcon className="h-8 w-9" />} place="top-[319px] left-[486px]" />
        <DesktopItem label="Final Fantasy VI" icon={<FinalFantasyIcon />} place="top-[631px] left-[485px]" />
        <DesktopItem label="The Wolf Among Us" icon={<WolfIcon />} place="top-[631px] left-[582px]" />
        <DesktopItem label="League Of Ratitas" icon={<LeagueIcon />} place="top-[631px] left-[679px]" />
        <DesktopItem label="Mount & Blade" icon={<MountBladeIcon />} place="top-[631px] left-[776px]" />
        <DesktopItem label="Amnesia" icon={<AmnesiaIcon />} place="top-[631px] left-[873px]" />
        <DesktopItem label="All Shit On Desktop" icon={<DesktopFolderIcon />} place="top-[631px] left-[1260px] px-3" />

        <h2 className="absolute top-[139px] left-[173px] font-['Liberation_Sans',sans-serif] text-[48px] leading-[54px] font-bold text-[#ffff00]">¡HACKERMAN!</h2>
        <p className="absolute top-[458px] left-[66px] font-['Liberation_Sans',sans-serif] text-[28px] leading-8 font-bold whitespace-nowrap text-[#dc0a0a]">
          Para sacarlos, solo arrastras la carpeta con
          <br />
          todo o los archivos que gustes a donde
          <br />
          quieras y listo, pero no olvides borrarlos
          <br />
          una vez usados!
        </p>

        <ArchiveWindow />

        <div className="pointer-events-none absolute top-[60px] left-[684px] h-[38px] w-[151px] border-3 border-[#cf0a0a]" />
        <div className="pointer-events-none absolute top-[294px] left-[496px] h-[88px] w-[76px] border-3 border-[#cf0a0a]" />
        <div className="pointer-events-none absolute top-[250px] left-[692px] h-[153px] w-[573px] border-3 border-[#cf0a0a]" />
      </main>
      <Taskbar />
    </div>
  );
}
